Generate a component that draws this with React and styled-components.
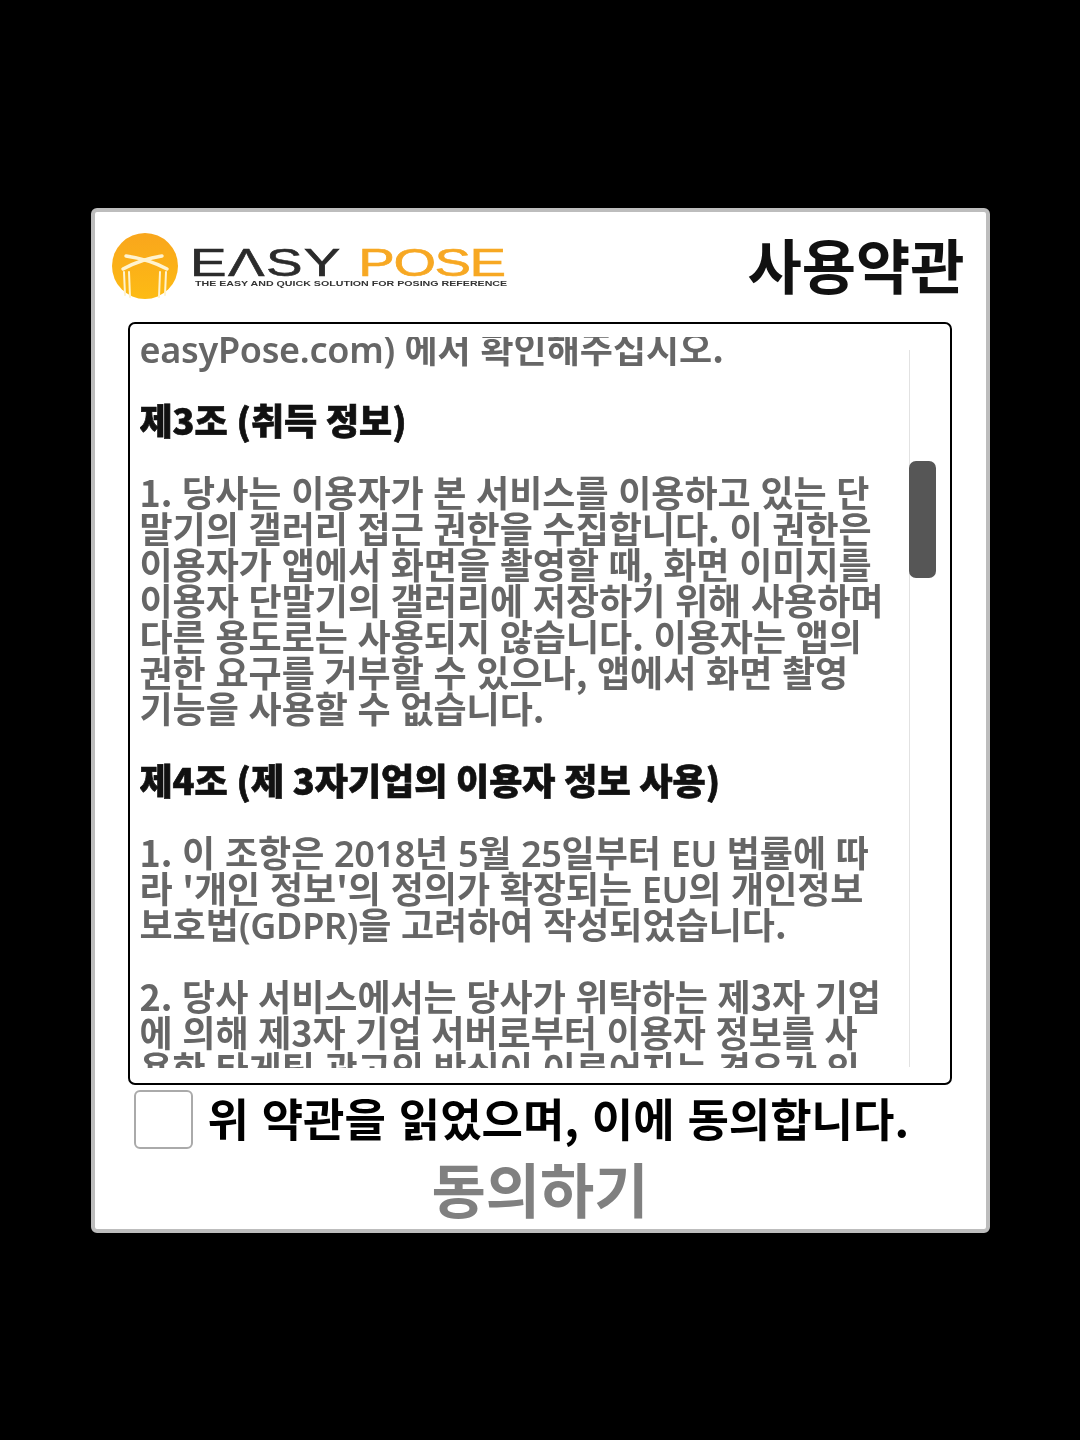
import React from 'react';
import styled, { createGlobalStyle } from 'styled-components';

const GlobalStyle = createGlobalStyle`
  html, body {
    margin: 0;
    background: #000;
  }
  body {
    font-family: "Noto Sans CJK KR", "Noto Sans", sans-serif;
  }
`;

const Page = styled.div`
  width: 1080px;
  height: 1440px;
  background: #000;
  display: flex;
  align-items: center;
  justify-content: center;
`;

const Dialog = styled.div`
  box-sizing: border-box;
  width: 899px;
  height: 1025px;
  background: #fff;
  border: 4px solid #bdbdbd;
  border-radius: 6px;
  display: flex;
  flex-direction: column;
`;

const Header = styled.header`
  box-sizing: border-box;
  height: 110px;
  flex: none;
  display: flex;
  align-items: center;
  justify-content: space-between;
  padding: 0 21px 2px 17px;
`;

const Brand = styled.div`
  display: flex;
  align-items: center;
  gap: 12px;
  filter: blur(0.4px);
`;

const BrandText = styled.div`
  width: 320px;
  height: 52px;
  margin-top: 2px;
  display: flex;
  flex-direction: column;
`;

const BrandName = styled.div`
  display: flex;
  gap: 11.5px;
  height: 38px;
  font-family: "Liberation Sans", sans-serif;
  font-size: 38px;
  line-height: 44px;
  transform-origin: left center;
  transform: scaleX(1.44);
`;

const BrandWord = styled.span`
  color: ${p => p.$color};
  letter-spacing: ${p => p.$spacing}px;
  -webkit-text-stroke: 0.6px ${p => p.$color};
`;

const Tagline = styled.div`
  font-family: "Liberation Sans", sans-serif;
  font-size: 8px;
  font-weight: 700;
  line-height: 10px;
  color: #333;
  white-space: nowrap;
  margin-left: 5px;
  transform-origin: left center;
  transform: scaleX(1.33);
`;

const Title = styled.h1`
  margin: 0 0 4px;
  font-size: 59px;
  font-weight: 700;
  line-height: 1;
  color: #111;
  filter: blur(0.4px);
`;

const TermsBox = styled.div`
  box-sizing: border-box;
  position: relative;
  flex: none;
  width: 824px;
  height: 763px;
  margin-left: 33px;
  padding: 13px 0 15px 10px;
  border: 2.5px solid #000;
  border-radius: 7px;
`;

const TermsScroll = styled.div`
  height: 100%;
  overflow: hidden;
`;

const TermsText = styled.div`
  margin-top: -8px;
  font-size: 36px;
  font-weight: 700;
  line-height: 36px;
  word-spacing: 1.5px;
  color: #666;
  white-space: pre;
  filter: blur(0.5px);
`;

const Latin = styled.span`
  font-family: "Noto Sans", sans-serif;
  font-weight: 600;
  line-height: 0;
  letter-spacing: -0.3px;
`;

const Para = styled.p`
  margin: 0 0 36px;
`;

const Heading = styled.h2`
  margin: 0 0 36px;
  font-size: 36px;
  line-height: 36px;
  font-weight: 900;
  word-spacing: 0.6px;
  color: #111;
  -webkit-text-stroke: 0.7px #111;
`;

const Track = styled.div`
  position: absolute;
  left: 779px;
  top: 26px;
  bottom: 16px;
  width: 1px;
  background: #e2e2e2;
`;

const Thumb = styled.div`
  position: absolute;
  left: 779px;
  top: 137px;
  width: 27px;
  height: 117px;
  border-radius: 7px;
  background: #565656;
`;

const AgreeRow = styled.label`
  display: flex;
  align-items: center;
  gap: 15px;
  margin: 4px 0 0 39px;
  height: 62px;
  flex: none;
`;

const Check = styled.span`
  box-sizing: border-box;
  width: 59px;
  height: 59px;
  border: 2.5px solid #aaa;
  border-radius: 6px;
  background: #fff;
`;

const AgreeText = styled.span`
  font-size: 45px;
  font-weight: 700;
  color: #000;
  line-height: 1;
  word-spacing: 2.6px;
  white-space: nowrap;
  margin-top: -5px;
  filter: blur(0.3px);
`;

const Submit = styled.div`
  text-align: center;
  font-size: 59px;
  font-weight: 700;
  line-height: 74px;
  color: #808080;
  filter: blur(0.4px);
`;

const LogoMark = () => (
  <svg width="66" height="66" viewBox="0 0 66 66">
    <defs>
      <linearGradient id="logoFill" x1="0" y1="0" x2="0" y2="1">
        <stop offset="0" stopColor="#f9a61c" />
        <stop offset="1" stopColor="#fdbb14" />
      </linearGradient>
    </defs>
    <circle cx="33" cy="33" r="33" fill="url(#logoFill)" />
    <g fill="none" stroke="#fff3cf" strokeLinecap="round">
      <path d="M14 23 C28 25 44 30 55 36" strokeWidth="3.5" />
      <path d="M50 23 C36 25 22 30 11 36" strokeWidth="3.5" />
      <path d="M12 39 L13 62 M17 39 L18 64 M48 39 L47 64 M54 39 L53 62" strokeWidth="2" />
    </g>
  </svg>
);

export default function App() {
  return (
    <Page>
      <GlobalStyle />
      <Dialog>
        <Header>
          <Brand>
            <LogoMark />
            <BrandText>
              <BrandName>
                <BrandWord $color="#2b2b2b" $spacing={1}>EΛSY</BrandWord>
                <BrandWord $color="#f7a823" $spacing={-1}>POSE</BrandWord>
              </BrandName>
              <Tagline>THE EASY AND QUICK SOLUTION FOR POSING REFERENCE</Tagline>
            </BrandText>
          </Brand>
          <Title>사용약관</Title>
        </Header>
        <TermsBox>
          <TermsScroll>
            <TermsText>
              <Para><Latin>easyPose.com)</Latin> 에서 확인해주십시오.</Para>
              <Heading>제3조 (취득 정보)</Heading>
              <Para>{`1. 당사는 이용자가 본 서비스를 이용하고 있는 단
말기의 갤러리 접근 권한을 수집합니다. 이 권한은
이용자가 앱에서 화면을 촬영할 때, 화면 이미지를
이용자 단말기의 갤러리에 저장하기 위해 사용하며
다른 용도로는 사용되지 않습니다. 이용자는 앱의
권한 요구를 거부할 수 있으나, 앱에서 화면 촬영
기능을 사용할 수 없습니다.`}</Para>
              <Heading>제4조 (제 3자기업의 이용자 정보 사용)</Heading>
              <Para>
                1. 이 조항은 <Latin>2018</Latin>년 <Latin>5</Latin>월 <Latin>25</Latin>일부터 <Latin>EU</Latin> 법률에 따{'\n'}
                라 '개인 정보'의 정의가 확장되는 <Latin>EU</Latin>의 개인정보{'\n'}
                보호법<Latin>(GDPR)</Latin>을 고려하여 작성되었습니다.
              </Para>
              <Para>{`2. 당사 서비스에서는 당사가 위탁하는 제3자 기업
에 의해 제3자 기업 서버로부터 이용자 정보를 사
용한 타게팅 광고의 방식이 이루어지는 경우가 있`}</Para>
            </TermsText>
          </TermsScroll>
          <Track />
          <Thumb />
        </TermsBox>
        <AgreeRow>
          <Check />
          <AgreeText>위 약관을 읽었으며, 이에 동의합니다.</AgreeText>
        </AgreeRow>
        <Submit>동의하기</Submit>
      </Dialog>
    </Page>
  );
}
